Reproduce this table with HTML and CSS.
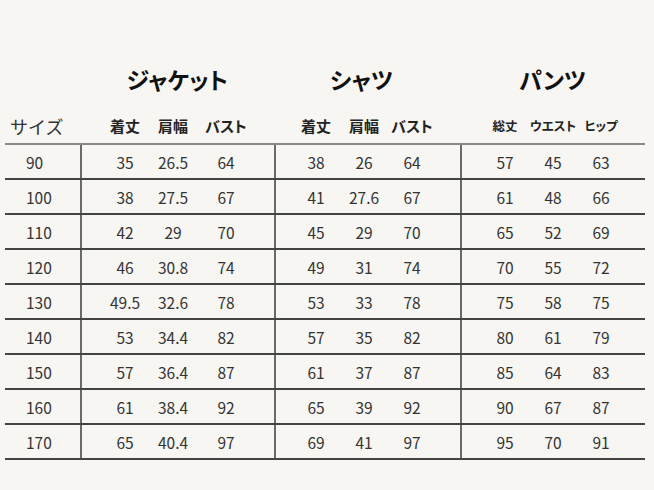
FILE: index.html
```html
<!DOCTYPE html>
<html lang="ja">
<head>
<meta charset="utf-8">
<link rel="stylesheet" href="styles.css">
</head>
<body>
<div class="sheet">
  <div class="titles">
    <div class="size-col"></div>
    <div class="title jacket">ジャケット</div>
    <div class="title shirt">シャツ</div>
    <div class="title pants">パンツ</div>
  </div>
  <div class="subhead">
    <div class="size-col size-head">サイズ</div>
    <div class="block jacket"><span>着丈</span><span>肩幅</span><span>バスト</span></div>
    <div class="block shirt"><span>着丈</span><span>肩幅</span><span>バスト</span></div>
    <div class="block pants small"><span>総丈</span><span>ウエスト</span><span>ヒップ</span></div>
  </div>
  <div class="table" id="table"></div>
</div>
<script>
var data = [
  [90, 35, 26.5, 64, 38, 26, 64, 57, 45, 63],
  [100, 38, 27.5, 67, 41, 27.6, 67, 61, 48, 66],
  [110, 42, 29, 70, 45, 29, 70, 65, 52, 69],
  [120, 46, 30.8, 74, 49, 31, 74, 70, 55, 72],
  [130, 49.5, 32.6, 78, 53, 33, 78, 75, 58, 75],
  [140, 53, 34.4, 82, 57, 35, 82, 80, 61, 79],
  [150, 57, 36.4, 87, 61, 37, 87, 85, 64, 83],
  [160, 61, 38.4, 92, 65, 39, 92, 90, 67, 87],
  [170, 65, 40.4, 97, 69, 41, 97, 95, 70, 91]
];
var t = document.getElementById('table');
var html = '';
data.forEach(function (r) {
  html += '<div class="row"><div class="size-col size-cell">' + r[0] + '</div>';
  ['jacket', 'shirt', 'pants'].forEach(function (c, i) {
    html += '<div class="block ' + c + '">';
    for (var k = 0; k < 3; k++) html += '<span>' + r[1 + i * 3 + k] + '</span>';
    html += '</div>';
  });
  html += '</div>';
});
t.innerHTML = html;
</script>
</body>
</html>
```

FILE: styles.css
```css
* { box-sizing: border-box; }
html, body {
  margin: 0;
  padding: 0;
  background: #f7f6f2;
}
body {
  font-family: "Noto Sans CJK JP", "Noto Sans", sans-serif;
  color: #333;
}
.sheet {
  width: 640px;
  margin-left: 5px;
  padding-top: 57px;
}
.titles {
  display: flex;
  height: 44px;
  align-items: center;
}
.size-col {
  width: 75px;
  flex: none;
}
.title {
  text-align: center;
  font-size: 23px;
  font-weight: 700;
  color: #111;
  line-height: 44px;
  font-feature-settings: "palt";
}
.title.jacket { width: 195px; }
.title.shirt { width: 186px; padding-right: 12px; }
.title.pants { width: 185px; }

.subhead {
  display: flex;
  height: 42px;
  padding-top: 15px;
}
.subhead > div { height: 20px; line-height: 20px; }
.size-head {
  font-size: 18px;
  padding-left: 5px;
  line-height: 20px;
}
.block {
  display: grid;
  grid-template-columns: 48px 48px 48px;
  align-items: center;
  flex: none;
}
.block span { text-align: center; white-space: nowrap; }
.block.jacket { width: 194px; padding-left: 21px; grid-template-columns: 48px 48px 58px; }
.block.shirt { width: 186px; padding-left: 18px; }
.block.pants { width: 185px; padding-left: 21px; }
.subhead .block {
  font-size: 15px;
  font-weight: 600;
  color: #222;
  font-feature-settings: "palt";
}
.subhead .block.small { font-size: 12.5px; }

.table {
  border-top: 2px solid #8a8a8a;
}
.row {
  display: flex;
  height: 35px;
  border-bottom: 2px solid #444;
  font-size: 15.5px;
  color: #333;
}
.row .size-cell {
  display: flex;
  align-items: center;
  padding-left: 21px;
}
.row .block {
  border-left: 2px solid #6a6a6a;
}
.row .block.jacket { padding-left: 19px; }
.row .block.shirt { padding-left: 16px; }
.row .block.pants { padding-left: 19px; width: 183px; }
```
